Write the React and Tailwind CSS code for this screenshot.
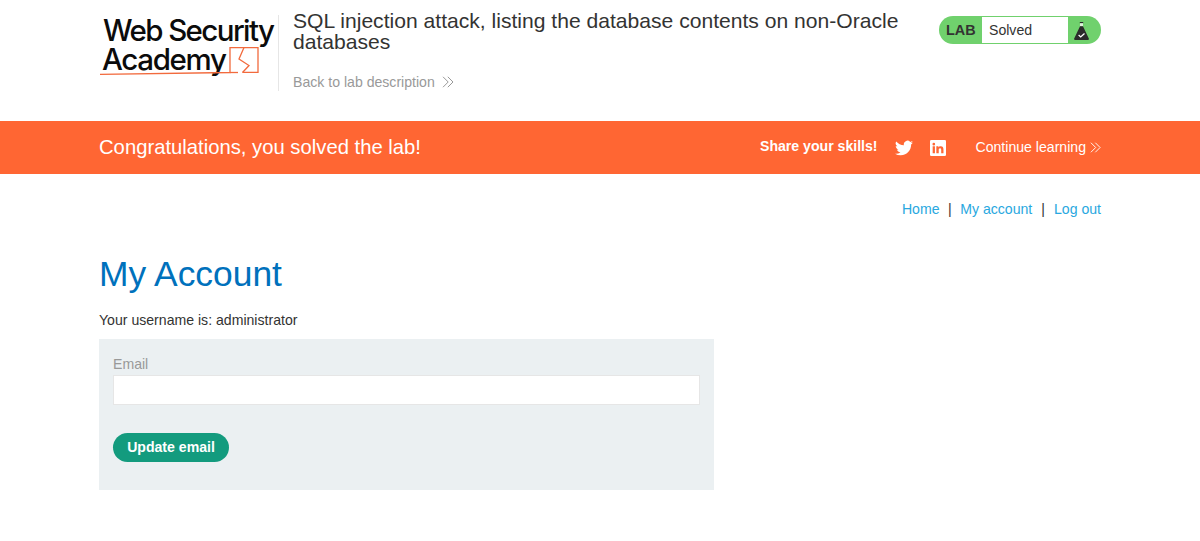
import React from "react";

const Chevrons = ({ className }) => (
  <svg viewBox="0 0 12 12" className={className} fill="none" stroke="currentColor" strokeWidth="1">
    <path d="M1 .8 6.200 6 1 11.200M5.800 .8 11 6 5.800 11.200" />
  </svg>
);

const Twitter = () => (
  <svg viewBox="0 0 24 24" className="w-[18px] h-[18px] block" fill="#fff">
    <path d="M24 4.600c-.9.4-1.800.7-2.800.8 1-.6 1.800-1.600 2.200-2.700-1 .6-2 1-3.100 1.200A4.900 4.900 0 0 0 11.900 8.400A14 14 0 0 1 1.700 3.200a4.900 4.900 0 0 0 1.500 6.600c-.8 0-1.600-.2-2.200-.6v.1c0 2.400 1.700 4.400 3.900 4.800-.7.2-1.500.2-2.200.1.600 2 2.400 3.400 4.600 3.400A9.900 9.900 0 0 1 0 19.600a14 14 0 0 0 7.500 2.200c9.100 0 14-7.500 14-14v-.6c1-.7 1.800-1.600 2.500-2.600z" />
  </svg>
);

const Linkedin = () => (
  <svg viewBox="0 0 24 24" className="w-[16px] h-[16px] block">
    <rect width="24" height="24" rx="2" fill="#fff" />
    <path fill="#ff6633" d="M4 9.500h3.400V20H4zM5.700 4.200a2 2 0 1 1 0 4 2 2 0 0 1 0-4zM9.500 9.500h3.200V11c.5-.9 1.700-1.800 3.400-1.800 3.500 0 4.100 2.300 4.100 5.300V20h-3.400v-4.900c0-1.200 0-2.700-1.700-2.700s-2 1.300-2 2.600v5H9.500z" />
  </svg>
);

const Flask = () => (
  <svg viewBox="0 0 15 18" className="w-[15px] h-[18px] block">
    <path d="M5.800 0h3.400v1.200H5.800z" fill="#2b2b2b" />
    <path d="M6 1.200h3v3H6z" fill="#dff3dc" />
    <path d="M6 4.200h3L14.800 16.500a1 1 0 0 1-.9 1.500H1.100a1 1 0 0 1-.9-1.500z" fill="#2b2b2b" />
    <path d="M4.600 13l2.100 1.900 3.800-3.400" stroke="#fff" strokeWidth="1.300" fill="none" />
  </svg>
);

const Logo = () => (
  <div className="relative w-[180px] h-[76px] shrink-0 border-r border-[#e6e6e6] font-['Inter','Noto_Sans',sans-serif] text-[#0b0b0b] font-medium">
    <div className="absolute left-[4px] top-[1px] text-[29.5px] leading-[28px] tracking-[-1.6px] whitespace-nowrap">Web Security</div>
    <div className="absolute left-[3px] top-[30px] text-[29.5px] leading-[28px] tracking-[-1.35px] whitespace-nowrap">Academy</div>
    <svg viewBox="0 0 179 76" className="absolute left-0 top-0 w-[179px] h-[76px]" fill="none" stroke="#f26a3d" strokeWidth="1.300">
      <path d="M1 59.300 131 57.500V32.600h28v24.800h-15.500" />
      <path d="M145 32.600 140 44l10 6.500-6.500 7" />
      <path d="M131 57.500h8" />
    </svg>
  </div>
);

export default function App() {
  return (
    <div className="min-h-[541px] bg-white font-['Liberation_Sans',Arial,sans-serif] text-[#333332]">
      <header className="h-[121px] px-[99px] pt-[15px] flex">
        <Logo />
        <div className="flex-1 pl-[14px]">
          <h2 className="text-[21.1px] leading-[21px] w-[630px] text-[#333332] -mt-[5px]">
            SQL injection attack, listing the database contents on non-Oracle databases
          </h2>
          <a className="mt-[21px] flex items-center gap-[7px] text-[14.1px] leading-[18px] text-[#999]">
            Back to lab description
            <Chevrons className="w-[12px] h-[12px]" />
          </a>
        </div>
        <div className="w-[162px] h-[28px] rounded-[14px] bg-[#70d16d] flex overflow-hidden items-stretch self-start mt-[1px] shrink-0">
          <span className="w-[43px] pl-[7px] pt-[1px] flex items-center text-[14.4px] font-bold text-[#333332]">LAB</span>
          <span className="w-[86px] my-[1px] bg-white pl-[7px] pt-[1px] flex items-center text-[14.1px] text-[#333332]">Solved</span>
          <span className="flex-1 flex items-center justify-center pr-[7px] pt-[2px]"><Flask /></span>
        </div>
      </header>

      <section className="h-[53px] bg-[#ff6633] text-white px-[99px] flex items-center">
        <h4 className="text-[20.25px] leading-[24px] flex-1 -mt-[2px]">Congratulations, you solved the lab!</h4>
        <span className="text-[14.1px] font-bold mr-[17px] -mt-[2px]">Share your skills!</span>
        <Twitter />
        <span className="w-[17px]" />
        <Linkedin />
        <a className="ml-[30px] flex items-center gap-[4px] text-[14.1px]">
          Continue learning
          <Chevrons className="w-[11px] h-[11px]" />
        </a>
      </section>

      <main className="px-[99px]">
        <nav className="flex justify-end items-center h-[70px] pt-[1px] text-[14.1px] text-[#333332]">
          <a className="text-[#29a8e0]">Home</a>
          <span className="mx-[8.500px]">|</span>
          <a className="text-[#29a8e0]">My account</a>
          <span className="mx-[9px]">|</span>
          <a className="text-[#29a8e0]">Log out</a>
        </nav>
        <h1 className="text-[35.4px] leading-[42px] text-[#0071bc] mt-[9px]">My Account</h1>
        <p className="text-[14.1px] leading-[18px] mt-[16px]">Your username is: administrator</p>
        <form className="mt-[10px] w-[615px] h-[151px] bg-[#ebf0f2] px-[14px] pt-[16px]">
          <label className="block text-[14.1px] leading-[18px] text-[#999]">Email</label>
          <input className="block w-full h-[30px] mt-[2px] bg-white border border-[#e6e6e6]" />
          <button type="button" className="mt-[28px] h-[29px] w-[116px] rounded-[15px] bg-[#139b7e] text-white text-[14.1px] font-bold">Update email</button>
        </form>
      </main>
    </div>
  );
}
